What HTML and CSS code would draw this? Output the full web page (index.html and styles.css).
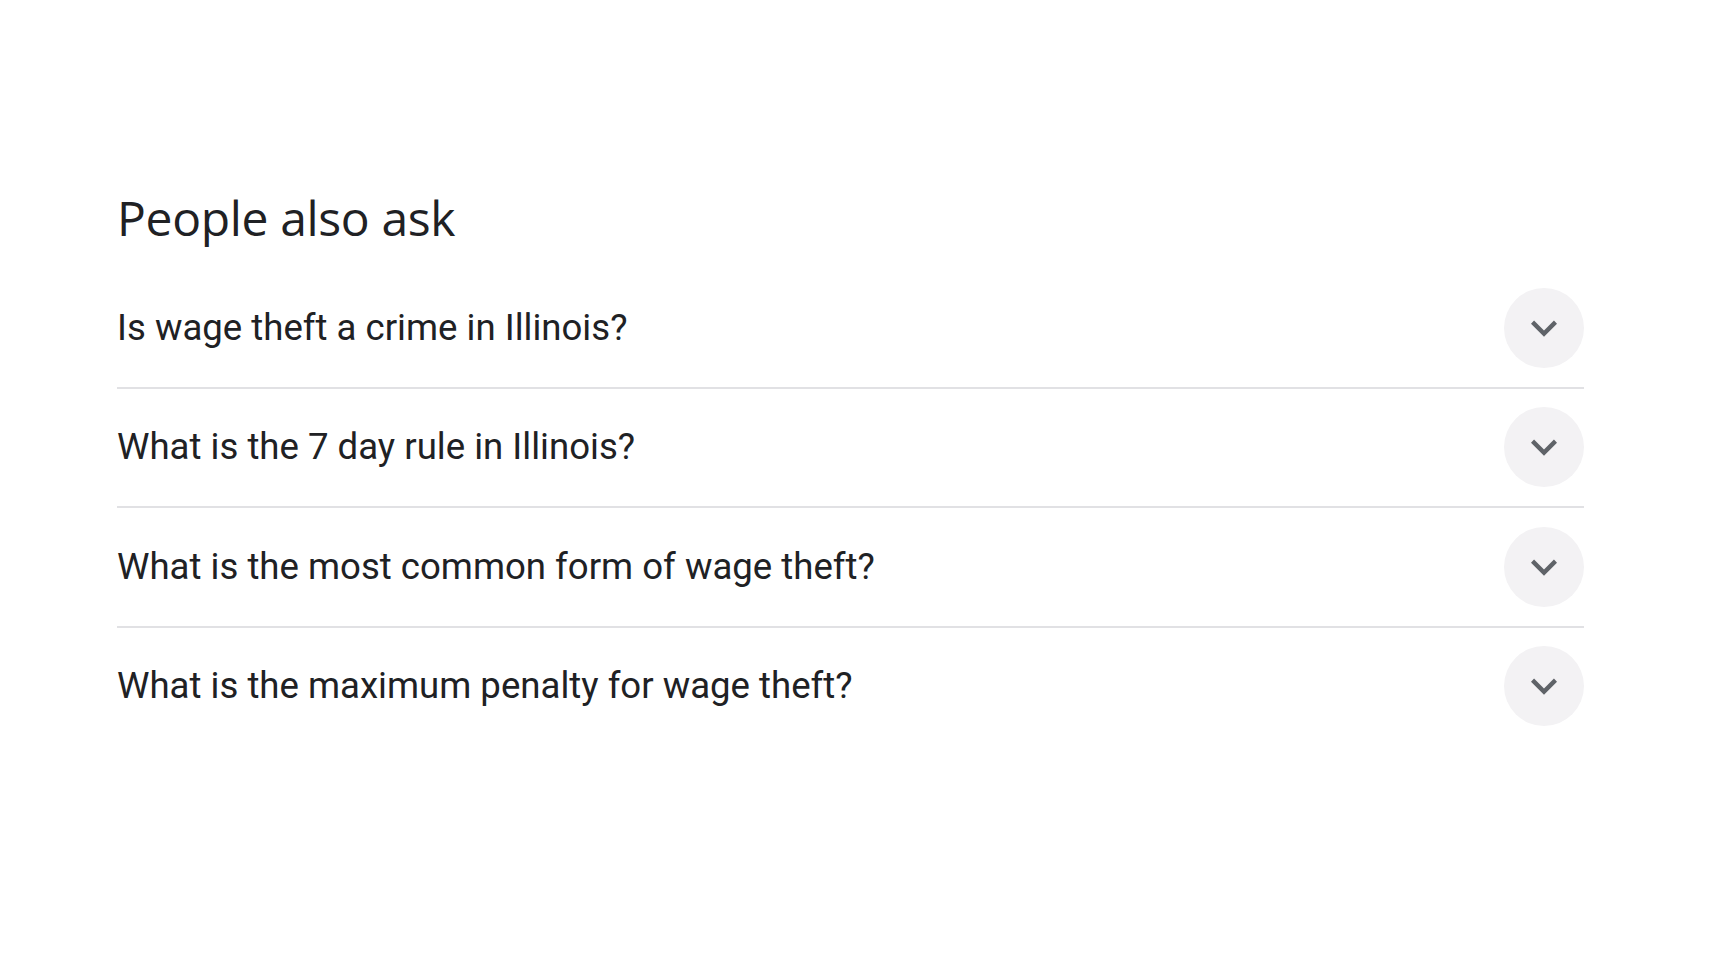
FILE: index.html
```html
<!DOCTYPE html>
<html lang="en">
<head>
<meta charset="utf-8">
<title>People also ask</title>
<link rel="stylesheet" href="styles.css">
</head>
<body>
  <section class="paa">
    <h2 class="paa-title">People also ask</h2>
    <div class="paa-list">
      <div class="paa-item">
        <span class="paa-question">Is wage theft a crime in Illinois?</span>
        <span class="paa-toggle">
          <svg viewBox="0 0 24 24" aria-hidden="true"><path d="M16.59 8.59L12 13.17 7.41 8.59 6 10l6 6 6-6z"/></svg>
        </span>
      </div>
      <div class="paa-item">
        <span class="paa-question">What is the 7 day rule in Illinois?</span>
        <span class="paa-toggle">
          <svg viewBox="0 0 24 24" aria-hidden="true"><path d="M16.59 8.59L12 13.17 7.41 8.59 6 10l6 6 6-6z"/></svg>
        </span>
      </div>
      <div class="paa-item">
        <span class="paa-question">What is the most common form of wage theft?</span>
        <span class="paa-toggle">
          <svg viewBox="0 0 24 24" aria-hidden="true"><path d="M16.59 8.59L12 13.17 7.41 8.59 6 10l6 6 6-6z"/></svg>
        </span>
      </div>
      <div class="paa-item">
        <span class="paa-question">What is the maximum penalty for wage theft?</span>
        <span class="paa-toggle">
          <svg viewBox="0 0 24 24" aria-hidden="true"><path d="M16.59 8.59L12 13.17 7.41 8.59 6 10l6 6 6-6z"/></svg>
        </span>
      </div>
    </div>
  </section>
</body>
</html>
```
FILE: styles.css
```css
html, body {
  margin: 0;
  padding: 0;
  background: #ffffff;
}

body {
  font-family: Roboto, "Liberation Sans", Arial, sans-serif;
  color: #202124;
}

.paa {
  width: 1467px;
  padding: 188px 0 0 117px;
}

.paa-title {
  margin: 0 0 21px;
  font-family: "Open Sans", Roboto, sans-serif;
  font-size: 48px;
  line-height: 60px;
  font-weight: 400;
  letter-spacing: -0.35px;
  color: #202124;
}

.paa-list {
  display: flex;
  flex-direction: column;
}

.paa-item {
  display: flex;
  align-items: center;
  justify-content: space-between;
  height: 117.5px;
  border-bottom: 2px solid #e1e1e4;
}

.paa-item:last-child {
  border-bottom: none;
}

.paa-question {
  font-size: 36.6px;
  line-height: 48px;
  color: #202124;
}

.paa-toggle {
  display: flex;
  align-items: center;
  justify-content: center;
  width: 80px;
  height: 80px;
  border-radius: 50%;
  background: #f3f2f4;
}

.paa-toggle svg {
  width: 52px;
  height: 52px;
  fill: #5f6368;
}
```
